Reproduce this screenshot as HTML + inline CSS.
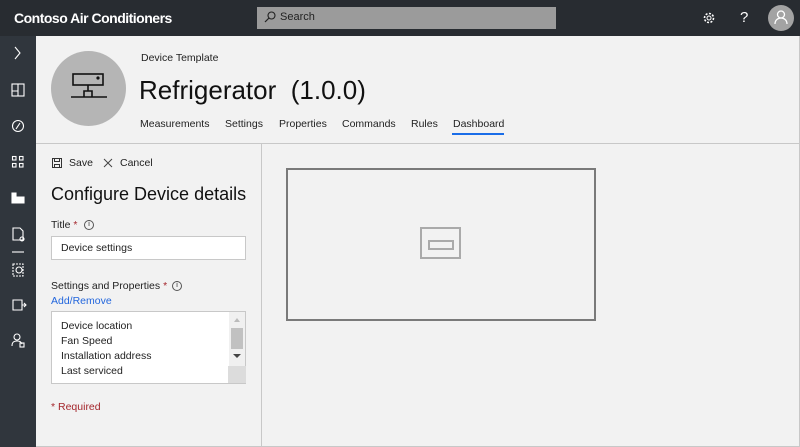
<!DOCTYPE html>
<html><head><style>
*{margin:0;padding:0;box-sizing:border-box}
body{width:800px;height:447px;overflow:hidden;background:#f2f2f2;font-family:"Liberation Sans",sans-serif;position:relative;color:#222}
.a{position:absolute}
.t{font-size:10.5px;white-space:nowrap}
</style></head><body>
<div class="a" style="left:0;top:0;width:800px;height:36px;background:#282c31"></div>
<div class="a" style="left:14px;top:10px;color:#fff;font-weight:bold;font-size:14px;letter-spacing:-0.5px">Contoso Air Conditioners</div>
<div class="a" style="left:257px;top:7px;width:299px;height:22px;background:#9b9b9b"></div>
<svg class="a" style="left:263px;top:10px" width="14" height="14" viewBox="0 0 14 14"><circle cx="8.5" cy="5.5" r="3.5" fill="none" stroke="#222" stroke-width="1.1"/><path d="M6 8L2 12" stroke="#222" stroke-width="1.2"/></svg>
<div class="a t" style="left:280px;top:11px;color:#222;font-size:11px">Search</div>
<svg class="a" style="left:702px;top:11px" width="14" height="14" viewBox="0 0 14 14"><circle cx="7" cy="7" r="4.5" fill="none" stroke="#fff" stroke-width="1.6" stroke-dasharray="2 1.5"/><circle cx="7" cy="7" r="2" fill="none" stroke="#fff" stroke-width="1"/></svg>
<div class="a" style="left:740px;top:9px;color:#fff;font-size:15px">?</div>
<div class="a" style="left:768px;top:5px;width:26px;height:26px;border-radius:50%;background:#a3a3a3"></div>
<svg class="a" style="left:773px;top:9px" width="16" height="16" viewBox="0 0 16 16"><circle cx="8" cy="5.5" r="3.5" fill="none" stroke="#fff" stroke-width="1.3"/><path d="M2 15c0-4 3-6 6-6s6 2 6 6" fill="none" stroke="#fff" stroke-width="1.3"/></svg>

<div class="a" style="left:0;top:36px;width:36px;height:411px;background:#30363d"></div>
<svg class="a" style="left:0;top:36px" width="36" height="320" viewBox="0 36 36 320" fill="none" stroke="#fff" stroke-width="1.1">
<path d="M15 47l5 6-5 6"/>
<rect x="12" y="84" width="12" height="12"/><path d="M12 91h6v5M18 84v7"/>
<circle cx="18" cy="126" r="5.5"/><path d="M16 129l4-6"/>
<rect x="12.5" y="156.5" width="3.5" height="3.5"/><rect x="19.5" y="156.5" width="3.5" height="3.5"/><rect x="12.5" y="163.5" width="3.5" height="3.5"/><rect x="19.5" y="163.5" width="3.5" height="3.5"/>
<path d="M12 193v10h12v-6h-8v-4z" fill="#fff"/>
<path d="M13 228h7l3 3v9h-10z"/><circle cx="22" cy="239" r="2" />
<path d="M12 252h12"/>
<rect x="13" y="264" width="10" height="12" stroke-dasharray="2 1"/><circle cx="19" cy="270" r="3"/>
<path d="M13 300h9v10h-9zM22 305h4M24 303l2 2-2 2"/>
<circle cx="17" cy="337" r="3"/><path d="M12 346c0-4 2-5 5-5s4 1 5 3"/><rect x="20" y="343" width="4" height="4"/>
</svg>

<div class="a" style="left:51px;top:51px;width:75px;height:75px;border-radius:50%;background:#b5b5b5"></div>
<svg class="a" style="left:70px;top:72px" width="38" height="34" viewBox="0 0 38 34" fill="none" stroke="#111" stroke-width="1.6"><rect x="3" y="2" width="30" height="11"/><circle cx="28" cy="6" r="0.8" fill="#111"/><path d="M18 13v6M14 19h8v6h-8zM1 25h36"/></svg>
<div class="a t" style="left:141px;top:52px;font-size:10.5px">Device Template</div>
<div class="a" style="left:139px;top:75px;font-size:26px;color:#111;white-space:nowrap">Refrigerator&nbsp; (1.0.0)</div>
<div class="a t" style="left:140px;top:118px">Measurements</div>
<div class="a t" style="left:225px;top:118px">Settings</div>
<div class="a t" style="left:279px;top:118px">Properties</div>
<div class="a t" style="left:342px;top:118px">Commands</div>
<div class="a t" style="left:411px;top:118px">Rules</div>
<div class="a t" style="left:453px;top:118px">Dashboard</div>
<div class="a" style="left:452px;top:133px;width:52px;height:2px;background:#1a6de8"></div>
<div class="a" style="left:36px;top:143px;width:764px;height:1px;background:#c8c8c8"></div>
<div class="a" style="left:261px;top:143px;width:1px;height:304px;background:#c8c8c8"></div>
<div class="a" style="left:799px;top:36px;width:1px;height:411px;background:#c8c8c8"></div>
<div class="a" style="left:36px;top:446px;width:764px;height:1px;background:#c8c8c8"></div>

<svg class="a" style="left:51px;top:157px" width="12" height="12" viewBox="0 0 12 12" fill="none" stroke="#333"><rect x="1.5" y="1.5" width="9" height="9"/><path d="M3.5 1.5v3h5v-3M3.5 10.5v-3h5v3"/></svg>
<div class="a t" style="left:69px;top:157px">Save</div>
<svg class="a" style="left:103px;top:158px" width="10" height="10" viewBox="0 0 10 10" stroke="#444"><path d="M1 1l8 8M9 1l-8 8"/></svg>
<div class="a t" style="left:120px;top:157px">Cancel</div>
<div class="a" style="left:51px;top:184px;font-size:18px;color:#111;white-space:nowrap">Configure Device details</div>
<div class="a t" style="left:51px;top:219px">Title <span style="color:#a4262c">*</span></div>
<div class="a" style="left:84px;top:220px;width:10px;height:10px;border:1px solid #555;border-radius:50%;font-size:7px;text-align:center;line-height:8px">i</div>
<div class="a" style="left:51px;top:236px;width:195px;height:24px;background:#fff;border:1px solid #c8c8c8"></div>
<div class="a t" style="left:61px;top:242px">Device settings</div>
<div class="a t" style="left:51px;top:280px">Settings and Properties <span style="color:#a4262c">*</span></div>
<div class="a" style="left:172px;top:281px;width:10px;height:10px;border:1px solid #555;border-radius:50%;font-size:7px;text-align:center;line-height:8px">i</div>
<div class="a t" style="left:51px;top:295px;color:#2266dd">Add/Remove</div>
<div class="a" style="left:51px;top:311px;width:195px;height:73px;background:#fff;border:1px solid #c8c8c8"></div>
<div class="a" style="left:229px;top:312px;width:16px;height:71px;background:#f0f0f0"></div>
<div class="a" style="left:231px;top:328px;width:12px;height:21px;background:#c1c1c1"></div>
<div class="a" style="left:234px;top:318px;width:0;height:0;border:3px solid transparent;border-bottom:4px solid #bbb;border-top:0"></div>
<div class="a" style="left:233px;top:354px;width:0;height:0;border:4px solid transparent;border-top:4px solid #444;border-bottom:0"></div>
<div class="a" style="left:228px;top:366px;width:18px;height:17px;background:#dcdcdc"></div>
<div class="a t" style="left:61px;top:319px;line-height:15px">Device location<br>Fan Speed<br>Installation address<br>Last serviced</div>
<div class="a t" style="left:51px;top:401px;color:#a4262c">* Required</div>

<div class="a" style="left:286px;top:168px;width:310px;height:153px;border:2px solid #7a7a7a"></div>
<div class="a" style="left:420px;top:227px;width:41px;height:32px;border:2px solid #aaa"></div>
<div class="a" style="left:428px;top:240px;width:26px;height:10px;border:2px solid #aaa"></div>
</body></html>
